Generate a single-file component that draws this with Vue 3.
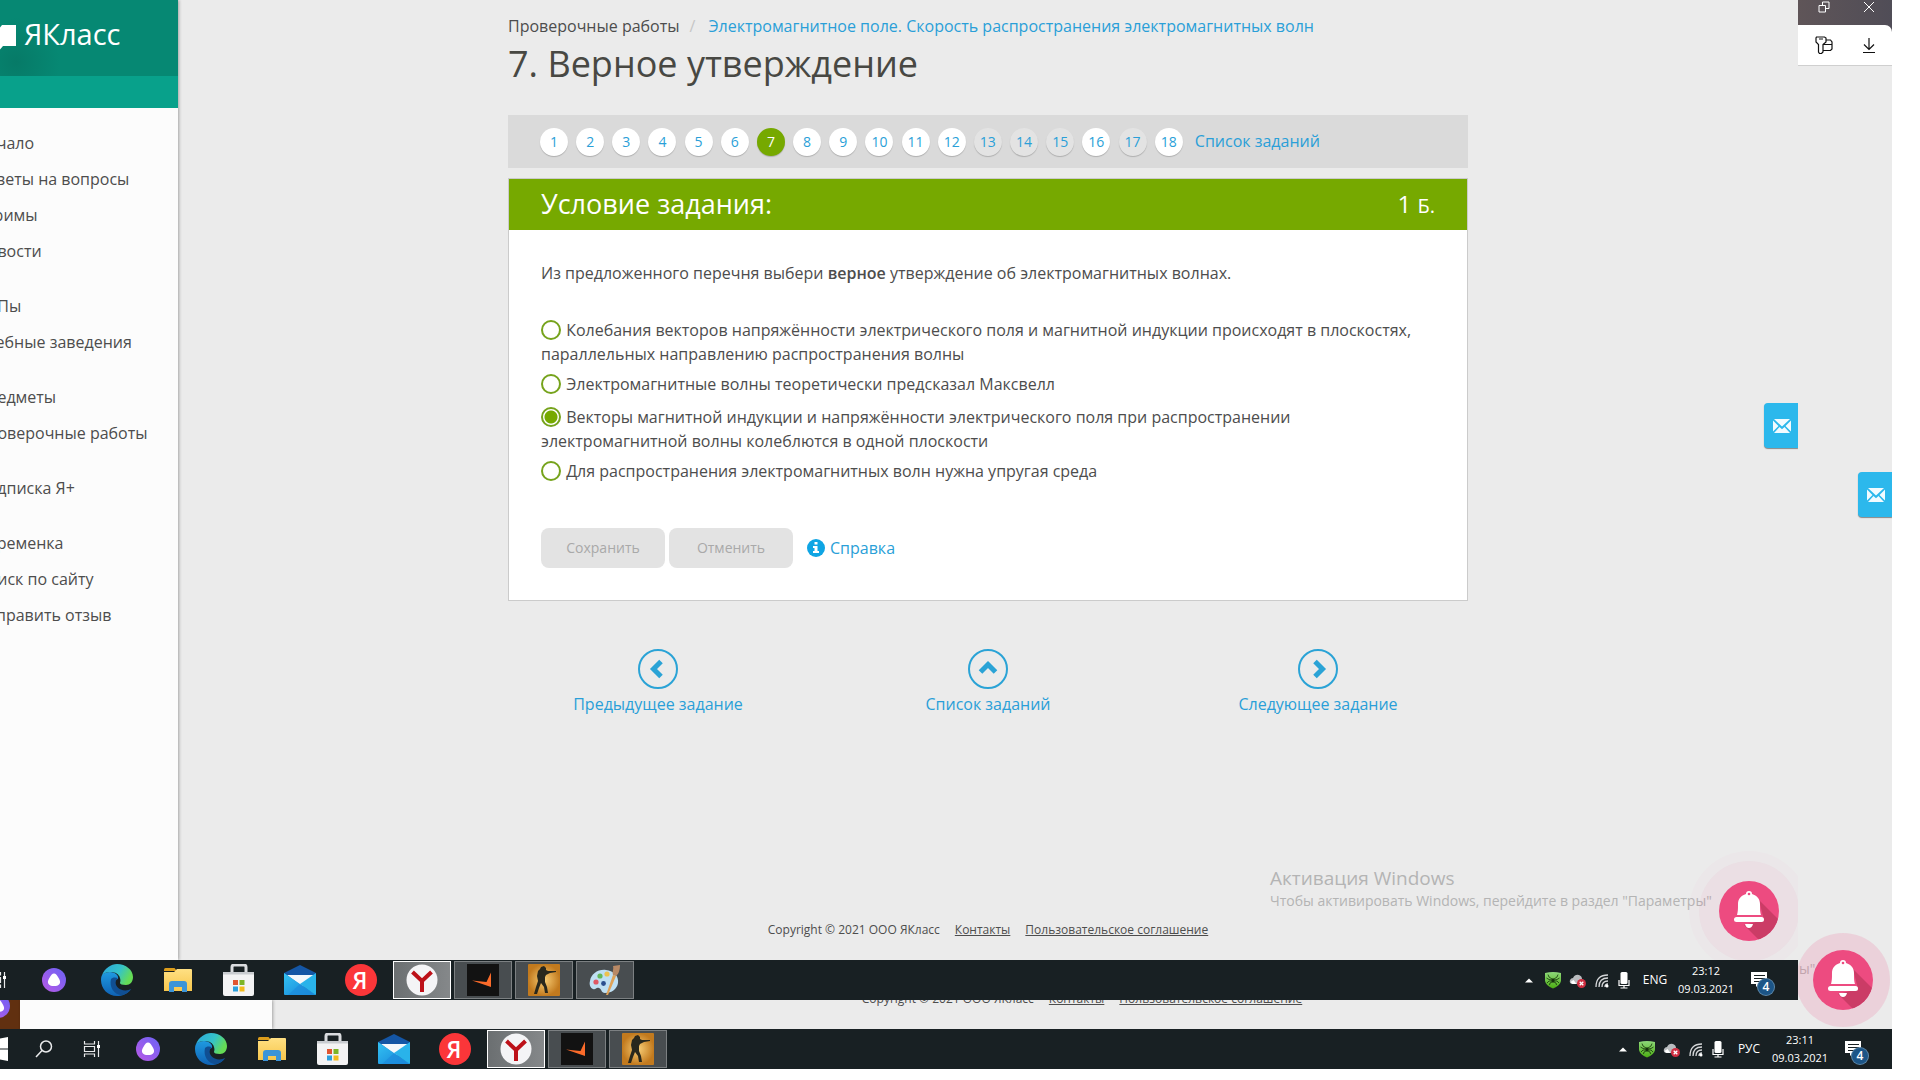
<script setup>
import { ref } from 'vue'

const menu = [
  ['Начало', 'Ответы на вопросы', 'Стримы', 'Новости'],
  ['ТОПы', 'Учебные заведения'],
  ['Предметы', 'Проверочные работы'],
  ['Подписка Я+'],
  ['Переменка', 'Поиск по сайту', 'Отправить отзыв'],
]

const current = 7
const answered = [13, 14, 15, 17]

const options = [
  'Колебания векторов напряжённости электрического поля и магнитной индукции происходят в плоскостях, параллельных направлению распространения волны',
  'Электромагнитные волны теоретически предсказал Максвелл',
  'Векторы магнитной индукции и напряжённости электрического поля при распространении электромагнитной волны колеблются в одной плоскости',
  'Для распространения электромагнитных волн нужна упругая среда',
]
const chosen = ref(2)

const steps = [
  { label: 'Предыдущее задание', d: 'M23 12.500l-7.500 7.500 7.500 7.500' },
  { label: 'Список заданий', d: 'M12.500 23l7.500-7.500 7.500 7.500' },
  { label: 'Следующее задание', d: 'M17 12.500l7.500 7.500-7.500 7.500' },
]

const pinned = ['edge', 'folder', 'store', 'mail', 'yandex']
const frontOpen = ['browser', 'faceit', 'csgo', 'paint']
const backOpen = ['browser', 'faceit', 'csgo']
const tray = ['arrow', 'shield', 'cloud', 'wifi', 'mic']
</script>

<template>
  <svg class="sprite" aria-hidden="true">
    <defs>
      <linearGradient id="g-alisa" x1="1" y1="0" x2="0" y2="1"><stop offset="0" stop-color="#6a62f5" /><stop offset="1" stop-color="#b95ae6" /></linearGradient>
      <linearGradient id="g-edge-a" x1="0" y1="0" x2="1" y2="0.4"><stop offset="0" stop-color="#2aa6dc" /><stop offset="0.6" stop-color="#35c3c9" /><stop offset="1" stop-color="#65dc55" /></linearGradient>
      <linearGradient id="g-edge-b" x1="0" y1="0" x2="0" y2="1"><stop offset="0" stop-color="#1f9ae0" /><stop offset="1" stop-color="#0f62b4" /></linearGradient>
      <linearGradient id="g-folder" x1="0" y1="0" x2="0" y2="1"><stop offset="0" stop-color="#ffe083" /><stop offset="1" stop-color="#f7c64c" /></linearGradient>
      <linearGradient id="g-mail" x1="0" y1="0" x2="1" y2="1"><stop offset="0" stop-color="#34c3f3" /><stop offset="1" stop-color="#1482d8" /></linearGradient>
      <radialGradient id="g-cs"><stop offset="0" stop-color="#f9cf77" /><stop offset="1" stop-color="#c27a1e" /></radialGradient>
      <linearGradient id="g-shield" x1="0" y1="0" x2="0" y2="1"><stop offset="0" stop-color="#8ed87a" /><stop offset="1" stop-color="#4cae12" /></linearGradient>
      <clipPath id="c-bell"><circle cx="30" cy="30" r="30" /></clipPath>
    </defs>
    <symbol id="i-start" viewBox="0 0 8 24"><path d="M0 1.500l8-1.500v11.400H0zM0 12.500h8V24l-8-1.500z" fill="#fff" /></symbol>
    <symbol id="i-search" viewBox="0 0 18 18"><g fill="none" stroke="#e9eaeb" stroke-width="1.500"><circle cx="11" cy="6.500" r="5.500" /><path d="M7 10.500L1 17" /></g></symbol>
    <symbol id="i-tasks" viewBox="0 0 18 18"><g fill="none" stroke="#e9eaeb" stroke-width="1.200"><path d="M1.500 1v3h10V1M1.500 17v-3h10v3M1.500 6.500h10v5h-10zM15.500 1v16" /></g><path d="M14 5h3v3h-3z" fill="#fff" /></symbol>
    <symbol id="i-alisa" viewBox="0 0 24 24"><circle cx="12" cy="12" r="12" fill="url(#g-alisa)" /><path d="M12 5.500c1.800 0 2.700 1.300 4.300 4.100 1.300 2.300 2.200 3.900 1.600 5.600-.8 2.100-3.100 2.800-5.900 2.800s-5.100-.7-5.900-2.800c-.6-1.700.3-3.300 1.600-5.600 1.600-2.800 2.500-4.100 4.300-4.100z" fill="#fff" /></symbol>
    <symbol id="i-edge" viewBox="0 0 32 32">
      <path d="M0 16C0 9 3 9 9 8c6 0 9 4 8 7-3 0-5 4-3 8 3 5 9 6 15 3-3 4-8 6-13 6C7 32 0 25 0 16z" fill="url(#g-edge-b)" />
      <path d="M1 11C4 4 10 0 16 0c9 0 16 6 16 13 0 5-3 8-7 8-4 0-6-1-6-2s1-2 0-5c-1-4-5-6-9-6-4 0-7 1-9 3z" fill="url(#g-edge-a)" />
      <path d="M10 15c-2 8 3 16 11 16.300 4-1 7-3 9.300-6.300-5 2.500-11 1.500-14-2-2.500-3-2-7 .7-9-3-1-6-.5-7 1z" fill="#104f93" />
    </symbol>
    <symbol id="i-folder" viewBox="-2 -4 32 32"><path d="M0 1.500Q0 0 1.500 0h9L13 3H0z" fill="#dc9d1c" /><path d="M0 4h10l3-3h14q1 0 1 1v21H0z" fill="url(#g-folder)" /><path d="M5 24v-8q0-3 3-3h12q3 0 3 3v8h-5v-5h-8v5z" fill="#3c94d8" /></symbol>
    <symbol id="i-store" viewBox="0 0 32 32"><path d="M9 9V3q0-2 2-2h10q2 0 2 2v6" fill="none" stroke="#dadcdf" stroke-width="3" /><path d="M0 8h31v22q0 2-2 2H2q-2 0-2-2z" fill="#f3f3f4" /><path d="M0 8h31v2.500H0z" fill="#c9ccd0" /><path d="M10 16h5v5h-5z" fill="#e0542f" /><path d="M16.500 16h5v5h-5z" fill="#7db526" /><path d="M10 22.500h5v5h-5z" fill="#2c9fdc" /><path d="M16.500 22.500h5v5h-5z" fill="#f2bb1c" /></symbol>
    <symbol id="i-mail" viewBox="0 0 32 30"><path d="M0 8L16 0l16 8v10H0z" fill="#1456a5" /><path d="M3 10h27l-11 12z" fill="#f4f8fb" /><path d="M0 8l32 22H1q-1 0-1-1z" fill="url(#g-mail)" /><path d="M32 8v21q0 1-1 1L16 19z" fill="#29b3ea" /><path d="M16 19l16 11H4z" fill="#1d8bdc" opacity=".7" /></symbol>
    <symbol id="i-yandex" viewBox="0 0 32 32"><circle cx="16" cy="16" r="16" fill="#fb3639" /><text x="15" y="24.500" text-anchor="middle" font-family="Open Sans, sans-serif" font-size="23" font-weight="600" fill="#fff">Я</text></symbol>
    <symbol id="i-browser" viewBox="0 0 32 32"><circle cx="16" cy="16" r="15.500" fill="#f4f4f6" /><path d="M6.500 8l9.500 9 9.500-9M16 16.500V28" fill="none" stroke="#bd1119" stroke-width="4" /></symbol>
    <symbol id="i-faceit" viewBox="0 0 32 32"><path d="M0 0h32v32H0z" fill="#121212" /><path d="M5 16.500l14.500 1.500L24 8.500V23z" fill="#fb6b2a" /></symbol>
    <symbol id="i-csgo" viewBox="0 0 32 32"><rect width="32" height="32" rx="1" fill="url(#g-cs)" /><path d="M13 3l3-1 2 2v2l2 1h8v1l-6 1-4 2-1 2v5l2 5 1 6h-3l-1-6-3-4-2 5-2 6H6l2-7 2-6-1-5 1-5 2-2z" fill="#29281d" /></symbol>
    <symbol id="i-paint" viewBox="0 0 32 32"><path d="M1 17C2 10 9 5 17 6c8 1 13 6 12 13-1 6-6 10-13 10-4 0-3-4-6-5s-3 2-6 1-4-5-3-8z" fill="#bfe0f3" /><circle cx="7" cy="18" r="2.600" fill="#df5863" /><circle cx="11" cy="12" r="2.600" fill="#63b95a" /><circle cx="18" cy="10" r="2.600" fill="#edc24e" /><circle cx="14.500" cy="19.500" r="2.400" fill="#2b4f8f" /><path d="M17 31l7-20 3 1-8 19z" fill="#dfa257" /><path d="M24 11c-1-4 1-6 0-9l7-1c0 4-1 9-4 11z" fill="#b98965" /></symbol>
    <symbol id="i-arrow" viewBox="0 0 18 18"><path d="M5 11.500l4-4 4 4z" fill="#fff" /></symbol>
    <symbol id="i-shield" viewBox="0 0 18 18"><path d="M1 2q8-2 16 0v8q-1 5-8 7.500Q2 15 1 10z" fill="url(#g-shield)" /><g fill="none" stroke="#17330d" stroke-width=".8"><path d="M4 3.500l1 2.500 3 2M14 3.500l-1 2.500-3 2M2.500 7l2.500 1.500 3 .5M15.500 7L13 8.500l-3 .5M3 12l2-2 3 0M15 12l-2-2-3 0M5.500 14l.5-2 2-1M12.500 14l-.5-2-2-1" /></g><ellipse cx="9" cy="9.500" rx="1.500" ry="2.200" fill="#17330d" /></symbol>
    <symbol id="i-cloud" viewBox="0 0 18 18"><path d="M3 13q-3-1-2-4 1-2 3-2 2-4 6-3 3 1 3 4 3 1 2 5z" fill="#b9bcbf" /><path d="M1.500 11l3-2 3 4h-4z" fill="#fff" /><circle cx="12.500" cy="12.500" r="4.500" fill="#d02e41" /><path d="M10.700 10.700l3.600 3.600M14.300 10.700l-3.600 3.600" stroke="#fff" stroke-width="1.300" /></symbol>
    <symbol id="i-wifi" viewBox="0 0 18 18"><g fill="none" stroke="#d5d7d9" stroke-width="1.300"><path d="M3 16Q3 4 15 4M6 16Q6 7 15 7M9 16q0-6 6-6M12 16q0-3 3-3" /></g><circle cx="14" cy="15" r="1.500" fill="#fff" /></symbol>
    <symbol id="i-mic" viewBox="0 0 18 18"><rect x="4.500" y="1" width="7" height="12" rx="1.500" fill="#fff" /><path d="M3 9v5.500h10V9M8 14v3M4.500 17h7" fill="none" stroke="#fff" stroke-width="1.200" /></symbol>
    <symbol id="i-note" viewBox="0 0 26 26"><path d="M1 1h16v12H9l-3 3v-3H1z" fill="#fff" /><path d="M4 4.500h11M4 7.500h11M4 10.500h6" stroke="#171f22" stroke-width="1" /></symbol>
    <symbol id="i-envelope" viewBox="0 0 18 14"><path d="M1 0h16L9 7.500zM0 1.500L5.500 7 0 12.500zM18 1.500v11L12.500 7zM6.500 8L9 10.300 11.500 8l5.500 6H1z" fill="#f2fbff" /></symbol>
    <symbol id="i-bell" viewBox="0 0 60 60"><circle cx="30" cy="30" r="30" fill="#ed4b80" /><g clip-path="url(#c-bell)"><path d="M40 19l27 27v20H47L25 44l20-5z" fill="#cb3c66" /></g><path d="M30 10a3 3 0 0 1 3 3c5 1.500 8 5 8 10 0 6 0 7 1 11H18c1-4 1-5 1-11 0-5 3-8.500 8-10a3 3 0 0 1 3-3z" fill="#fff" /><circle cx="30" cy="13" r="1.300" fill="#ed4b80" /><rect x="15" y="36" width="30" height="5" rx="2.500" fill="#fff" /><path d="M26 43h8q-1 4-4 4t-4-4z" fill="#fff" /></symbol>
  </svg>

  <div class="desktop">
    <div class="upper">
      <section class="front">
        <div class="site">
          <aside class="sidebar">
            <a class="logo" href="#">
              <svg width="16" height="25" viewBox="0 0 16 25" aria-hidden="true"><path d="M0 2.500L2 0h14v21H3l-3 3.500z" fill="#fff" /></svg>
              <span>ЯКласс</span>
            </a>
            <div class="stripe"></div>
            <nav class="menu">
              <ul v-for="(group, i) in menu" :key="i">
                <li v-for="item in group" :key="item"><a href="#">{{ item }}</a></li>
              </ul>
            </nav>
          </aside>

          <main class="page">
            <div class="content">
              <nav class="crumbs">
                <a class="root" href="#">Проверочные работы</a>
                <span class="slash">/</span>
                <a href="#">Электромагнитное поле. Скорость распространения электромагнитных волн</a>
              </nav>
              <h1>7. Верное утверждение</h1>

              <nav class="tasks">
                <template v-for="n in 18" :key="n">
                  <a href="#" class="dot" :class="{ active: n === current, done: answered.includes(n) }">{{ n }}</a>{{ ' ' }}
                </template>
                <a href="#" class="all">Список заданий</a>
              </nav>

              <form class="card" @submit.prevent>
                <header>
                  <h2>Условие задания:</h2>
                  <p class="points">1 <small>Б.</small></p>
                </header>
                <div class="body">
                  <p class="question">Из предложенного перечня выбери <b>верное</b> утверждение об электромагнитных волнах.</p>
                  <div class="options">
                    <label v-for="(text, i) in options" :key="i"><input v-model="chosen" type="radio" name="answer" :value="i"> {{ text }}</label>
                  </div>
                  <div class="actions">
                    <button type="submit" disabled>Сохранить</button>
                    <button type="button" disabled>Отменить</button>
                    <a class="help" href="#">
                      <svg width="18" height="18" viewBox="0 0 18 18" aria-hidden="true"><circle cx="9" cy="9" r="9" fill="#0fa5e4" /><path d="M7.500 3h3v2.500h-3zM6 7h4.500v5H12v2H6v-2h1.500V9H6z" fill="#fff" /></svg>
                      <span>Справка</span>
                    </a>
                  </div>
                </div>
              </form>

              <nav class="steps">
                <a v-for="s in steps" :key="s.label" href="#">
                  <svg width="40" height="40" viewBox="0 0 40 40" aria-hidden="true"><circle cx="20" cy="20" r="19" fill="none" stroke="#2aa3d6" stroke-width="2" /><path :d="s.d" fill="none" stroke="#2aa3d6" stroke-width="5" /></svg>
                  <span>{{ s.label }}</span>
                </a>
              </nav>
            </div>
            <footer class="legal">
              <span>Copyright © 2021 ООО ЯКласс</span>
              <a href="#">Контакты</a>
              <a href="#">Пользовательское соглашение</a>
            </footer>
          </main>

          <div class="watermark">
            <strong>Активация Windows</strong>
            <span>Чтобы активировать Windows, перейдите в раздел "Параметры"</span>
          </div>
          <button class="feedback" type="button" aria-label="Написать"><svg width="18" height="14"><use href="#i-envelope" /></svg></button>
          <button class="bell" type="button" aria-label="Уведомления"><svg width="60" height="60"><use href="#i-bell" /></svg></button>
        </div>

        <div class="taskbar">
          <div class="apps shifted">
            <button class="cell narrow" type="button" aria-label="Задачи"><svg width="18" height="18"><use href="#i-tasks" /></svg></button>
            <button class="cell wide" type="button" aria-label="Алиса"><svg width="24" height="24"><use href="#i-alisa" /></svg></button>
            <button v-for="a in pinned" :key="a" class="cell" type="button" :aria-label="a"><svg width="32" height="32"><use :href="'#i-' + a" /></svg></button>
            <button v-for="a in frontOpen" :key="a" class="cell open" :class="{ focused: a === 'browser' }" type="button" :aria-label="a"><svg width="32" height="32"><use :href="'#i-' + a" /></svg></button>
          </div>
          <div class="tray">
            <svg v-for="t in tray" :key="t" :class="t" width="18" height="18"><use :href="'#i-' + t" /></svg>
            <span class="lang">ENG</span>
            <time class="clock"><span>23:12</span><span>09.03.2021</span></time>
            <span class="notes"><svg width="26" height="26"><use href="#i-note" /></svg><b>4</b></span>
          </div>
        </div>
      </section>

      <aside class="edge">
        <div class="titlebar">
          <button type="button" aria-label="Восстановить"><svg width="12" height="12" viewBox="0 0 12 12"><path d="M1 4.500h6.500V11H1zM4.500 4V1H11v6.500H8" fill="none" stroke="#fff" /></svg></button>
          <button type="button" aria-label="Закрыть"><svg width="12" height="12" viewBox="0 0 12 12"><path d="M1 1l10 10M11 1L1 11" fill="none" stroke="#fff" /></svg></button>
        </div>
        <div class="toolwrap">
          <div class="toolbar">
            <button type="button" aria-label="Пароли"><svg width="18" height="18" viewBox="0 0 18 18"><path d="M1.500 1h8l1.500 1v4L8 8.500V16l-1.500 1.500h-2L3.500 16V8.500L1 6V2zM4 3h4M10.500 4h5l1.500 2v7l-1.500 1.500H8M8 8.500h9" fill="none" stroke="#111" stroke-width="1.200" /></svg></button>
            <button type="button" aria-label="Загрузки"><svg width="14" height="18" viewBox="0 0 14 18"><path d="M7 2v11M2 8.500l5 5 5-5M1 16.500h12" fill="none" stroke="#111" stroke-width="1.200" /></svg></button>
          </div>
        </div>
        <button class="feedback lower" type="button" aria-label="Написать"><svg width="18" height="14"><use href="#i-envelope" /></svg></button>
        <span class="tail">ы"</span>
      </aside>
    </div>

    <div class="peek">
      <div class="avatar"><svg width="24" height="24"><use href="#i-alisa" /></svg></div>
      <div class="panel"></div>
      <footer class="legal">
        <span>Copyright © 2021 ООО ЯКласс</span>
        <a href="#">Контакты</a>
        <a href="#">Пользовательское соглашение</a>
      </footer>
    </div>

    <div class="taskbar">
      <div class="apps">
        <button class="cell start" type="button" aria-label="Пуск"><svg width="8" height="24"><use href="#i-start" /></svg></button>
        <button class="cell narrow" type="button" aria-label="Поиск"><svg width="18" height="18"><use href="#i-search" /></svg></button>
        <button class="cell narrow" type="button" aria-label="Задачи"><svg width="18" height="18"><use href="#i-tasks" /></svg></button>
        <button class="cell wide" type="button" aria-label="Алиса"><svg width="24" height="24"><use href="#i-alisa" /></svg></button>
        <button v-for="a in pinned" :key="a" class="cell" type="button" :aria-label="a"><svg width="32" height="32"><use :href="'#i-' + a" /></svg></button>
        <button v-for="a in backOpen" :key="a" class="cell open" :class="{ focused: a === 'browser' }" type="button" :aria-label="a"><svg width="32" height="32"><use :href="'#i-' + a" /></svg></button>
      </div>
      <div class="tray">
        <svg v-for="t in tray" :key="t" :class="t" width="18" height="18"><use :href="'#i-' + t" /></svg>
        <span class="lang">РУС</span>
        <time class="clock"><span>23:11</span><span>09.03.2021</span></time>
        <span class="notes"><svg width="26" height="26"><use href="#i-note" /></svg><b>4</b></span>
      </div>
    </div>
    <button class="bell back" type="button" aria-label="Уведомления"><svg width="60" height="60"><use href="#i-bell" /></svg></button>
  </div>
</template>

<style>
body {
  margin: 0;
  background: #fff;
}
</style>

<style scoped>
* {
  box-sizing: border-box;
}
.sprite {
  position: absolute;
  width: 0;
  height: 0;
}
.desktop {
  position: relative;
  display: flex;
  flex-direction: column;
  min-height: calc(100vh - 11px);
  margin: 0 28px 11px 0;
  overflow: hidden;
  background: #ebebeb;
  color: #4d4d4d;
  font: 16px/24px "Open Sans", "Noto Sans", sans-serif;
}
a {
  color: #2a9fd8;
  text-decoration: none;
}
button {
  padding: 0;
  border: 0;
  background: none;
  font: inherit;
  color: inherit;
}
svg {
  flex: none;
  display: block;
}
h1, h2, p, ul {
  margin: 0;
  padding: 0;
  font-weight: 400;
  list-style: none;
}

.upper {
  flex: 1;
  display: flex;
}
.front {
  position: relative;
  z-index: 2;
  flex: 1;
  min-width: 0;
  display: flex;
  flex-direction: column;
  background: #ebebeb;
}
.site {
  position: relative;
  flex: 1;
  display: flex;
  overflow: hidden;
}

.sidebar {
  width: 178px;
  flex: none;
  background: #fcfcfc;
  box-shadow: 1px 0 3px rgba(0, 0, 0, 0.3);
  overflow: hidden;
}
.logo {
  display: flex;
  align-items: flex-start;
  gap: 8px;
  height: 76px;
  padding-top: 25px;
  background: radial-gradient(circle at 16px 62px, #067a67, #068873 44px);
  color: #fff;
  font-size: 29px;
  line-height: 18px;
}
.stripe {
  height: 32px;
  background: #08a18b;
}
.menu {
  display: flex;
  flex-direction: column;
  gap: 19px;
  margin-left: -24px;
  padding-top: 17px;
  line-height: 36px;
  white-space: nowrap;
}
.menu a {
  color: #4d4d4d;
}

.page {
  flex: 1;
  min-width: 0;
  display: flex;
  flex-direction: column;
}
.content {
  width: 100%;
  max-width: 960px;
  margin: 0 auto;
  padding-top: 13px;
}
.crumbs {
  display: flex;
  line-height: 26px;
}
.crumbs .root {
  color: #4d4d4d;
}
.slash {
  margin: 0 13px 0 10px;
  color: #c6c6c6;
}
h1 {
  margin-bottom: 26px;
  color: #484843;
  font-size: 36px;
  line-height: 50px;
}
.tasks {
  height: 53px;
  margin-bottom: 10px;
  padding: 12px 32px;
  background: #dadada;
  line-height: 28px;
}
.dot {
  display: inline-block;
  width: 28px;
  height: 28px;
  margin-right: 4px;
  border-radius: 50%;
  background: #fff;
  box-shadow: 0 1px 1px rgba(0, 0, 0, 0.2);
  font-size: 14px;
  text-align: center;
}
.dot.done {
  background: #e3e3e3;
}
.dot.active {
  background: #76a900;
  color: #fff;
}
.all {
  margin-left: 4px;
}

.card {
  border: 1px solid #cbcbcb;
  background: #fff;
}
.card header {
  display: flex;
  align-items: center;
  justify-content: space-between;
  height: 51px;
  padding: 0 32px;
  background: #76a900;
  color: #fff;
}
h2 {
  padding-bottom: 2px;
  font-size: 27px;
  line-height: 36px;
}
.points {
  font-size: 24px;
  line-height: 36px;
}
.points small {
  font-size: 20px;
}
.body {
  padding: 31px 32px 32px;
}
.question b {
  font-weight: 600;
}
.options {
  margin-top: 34px;
  line-height: 21px;
}
.options label {
  display: block;
  margin-bottom: 8px;
}
.options input {
  appearance: none;
  width: 20px;
  height: 20px;
  margin: 1px 1px 4px 0;
  border: 2px solid #76a31c;
  border-radius: 50%;
  background: #fff;
  vertical-align: middle;
}
.options input:checked {
  background: radial-gradient(circle, #76a900 6px, #fff 7px);
}
.actions {
  display: flex;
  align-items: center;
  gap: 4px;
  margin-top: 43px;
}
.actions button {
  width: 124px;
  height: 40px;
  border-radius: 8px;
  background: #e3e3e3;
  color: #a9a9a9;
  font-size: 14px;
}
.help {
  display: flex;
  align-items: center;
  gap: 5px;
  margin-left: 10px;
}

.steps {
  display: flex;
  margin: 48px -15px 0;
}
.steps a {
  flex: 1;
  display: flex;
  flex-direction: column;
  align-items: center;
  gap: 3px;
}
.legal {
  display: flex;
  justify-content: center;
  gap: 15px;
  margin-top: auto;
  padding-bottom: 20px;
  color: #4d4d4d;
  font-size: 12px;
  line-height: 20px;
}
.legal a {
  color: #4d4d4d;
  text-decoration: underline;
}

.watermark {
  position: absolute;
  right: 72px;
  bottom: 48px;
  display: flex;
  flex-direction: column;
  width: 456px;
  color: #b4b4b4;
  font-size: 14px;
  line-height: 22px;
  white-space: nowrap;
}
.watermark strong {
  font-size: 19px;
  font-weight: 400;
  line-height: 24px;
}
.feedback {
  position: absolute;
  top: 403px;
  right: 0;
  display: flex;
  align-items: center;
  justify-content: center;
  width: 34px;
  height: 45px;
  padding-left: 2px;
  border-radius: 4px 0 0 4px;
  background: #2cb8ec;
  box-shadow: 0 1px 1px #888;
}
.feedback.lower {
  top: 472px;
}
.bell {
  position: absolute;
  right: 19px;
  bottom: 19px;
  width: 60px;
  height: 60px;
  border-radius: 50%;
  box-shadow: 0 0 0 20px rgba(237, 75, 128, 0.05), 0 0 0 30px rgba(237, 75, 128, 0.02);
}
.bell.back {
  bottom: 59px;
  z-index: 1;
  box-shadow: 0 0 0 17px rgba(237, 75, 128, 0.16);
}

.edge {
  position: relative;
  width: 94px;
  flex: none;
}
.titlebar,
.toolbar {
  display: flex;
  align-items: center;
  padding-left: 3px;
}
.titlebar {
  height: 25px;
  padding-bottom: 11px;
  background: linear-gradient(90deg, #5f5558, #504d57);
}
.toolwrap {
  background: #504d57;
}
.toolbar {
  height: 41px;
  border-bottom: 1px solid #cfcfcf;
  border-radius: 0 7px 0 0;
  background: #fff;
}
.titlebar button,
.toolbar button {
  flex: 1;
  display: flex;
  justify-content: center;
}
.tail {
  position: absolute;
  left: 1px;
  bottom: 20px;
  color: #b9b5b6;
  font-size: 14px;
  line-height: 22px;
}

.peek {
  display: flex;
  height: 29px;
  overflow: hidden;
}
.avatar {
  width: 20px;
  background: #613010;
}
.avatar svg {
  margin: -6px 0 0 -14px;
}
.panel {
  width: 252px;
  background: #fcfcfc;
  box-shadow: 1px 0 3px rgba(0, 0, 0, 0.3);
}
.peek .legal {
  flex: 1;
  margin-top: -11px;
}

.taskbar {
  display: flex;
  justify-content: space-between;
  height: 40px;
  overflow: hidden;
  background: #182023;
  color: #fff;
}
.apps {
  display: flex;
}
.apps.shifted {
  margin-left: -26px;
}
.cell {
  display: flex;
  align-items: center;
  justify-content: center;
  width: 61px;
  height: 40px;
  flex: none;
}
.cell.start {
  width: 20px;
  justify-content: flex-start;
}
.cell.narrow {
  width: 48px;
}
.cell.wide {
  width: 64px;
}
.cell.open {
  width: 58px;
  height: 38px;
  margin: 1px 1px 1px 2px;
  border: 1px solid #7c8082;
  background: #484d50;
}
.cell.focused {
  border-color: #fff;
  background: linear-gradient(90deg, #6b6f71, #85888a);
}
.tray {
  display: flex;
  align-items: center;
  font-size: 12px;
}
.arrow {
  margin-right: 6px;
}
.shield {
  margin-right: 7px;
}
.cloud {
  margin-right: 6px;
}
.wifi {
  margin-right: 5px;
}
.mic {
  margin-right: 4px;
}
.lang {
  width: 34px;
  text-align: center;
}
.clock {
  display: flex;
  flex-direction: column;
  align-items: center;
  width: 68px;
  margin-right: -2px;
  font-size: 11px;
  line-height: 18px;
}
.notes {
  position: relative;
  align-self: stretch;
  width: 60px;
  padding: 11px 0 0 12px;
}
.notes b {
  position: absolute;
  left: 20px;
  top: 19px;
  width: 16px;
  height: 16px;
  border-radius: 50%;
  background: #1c5587;
  box-shadow: 0 0 0 1px #5d87a8;
  font-size: 12px;
  font-weight: 600;
  line-height: 16px;
  text-align: center;
}
</style>
